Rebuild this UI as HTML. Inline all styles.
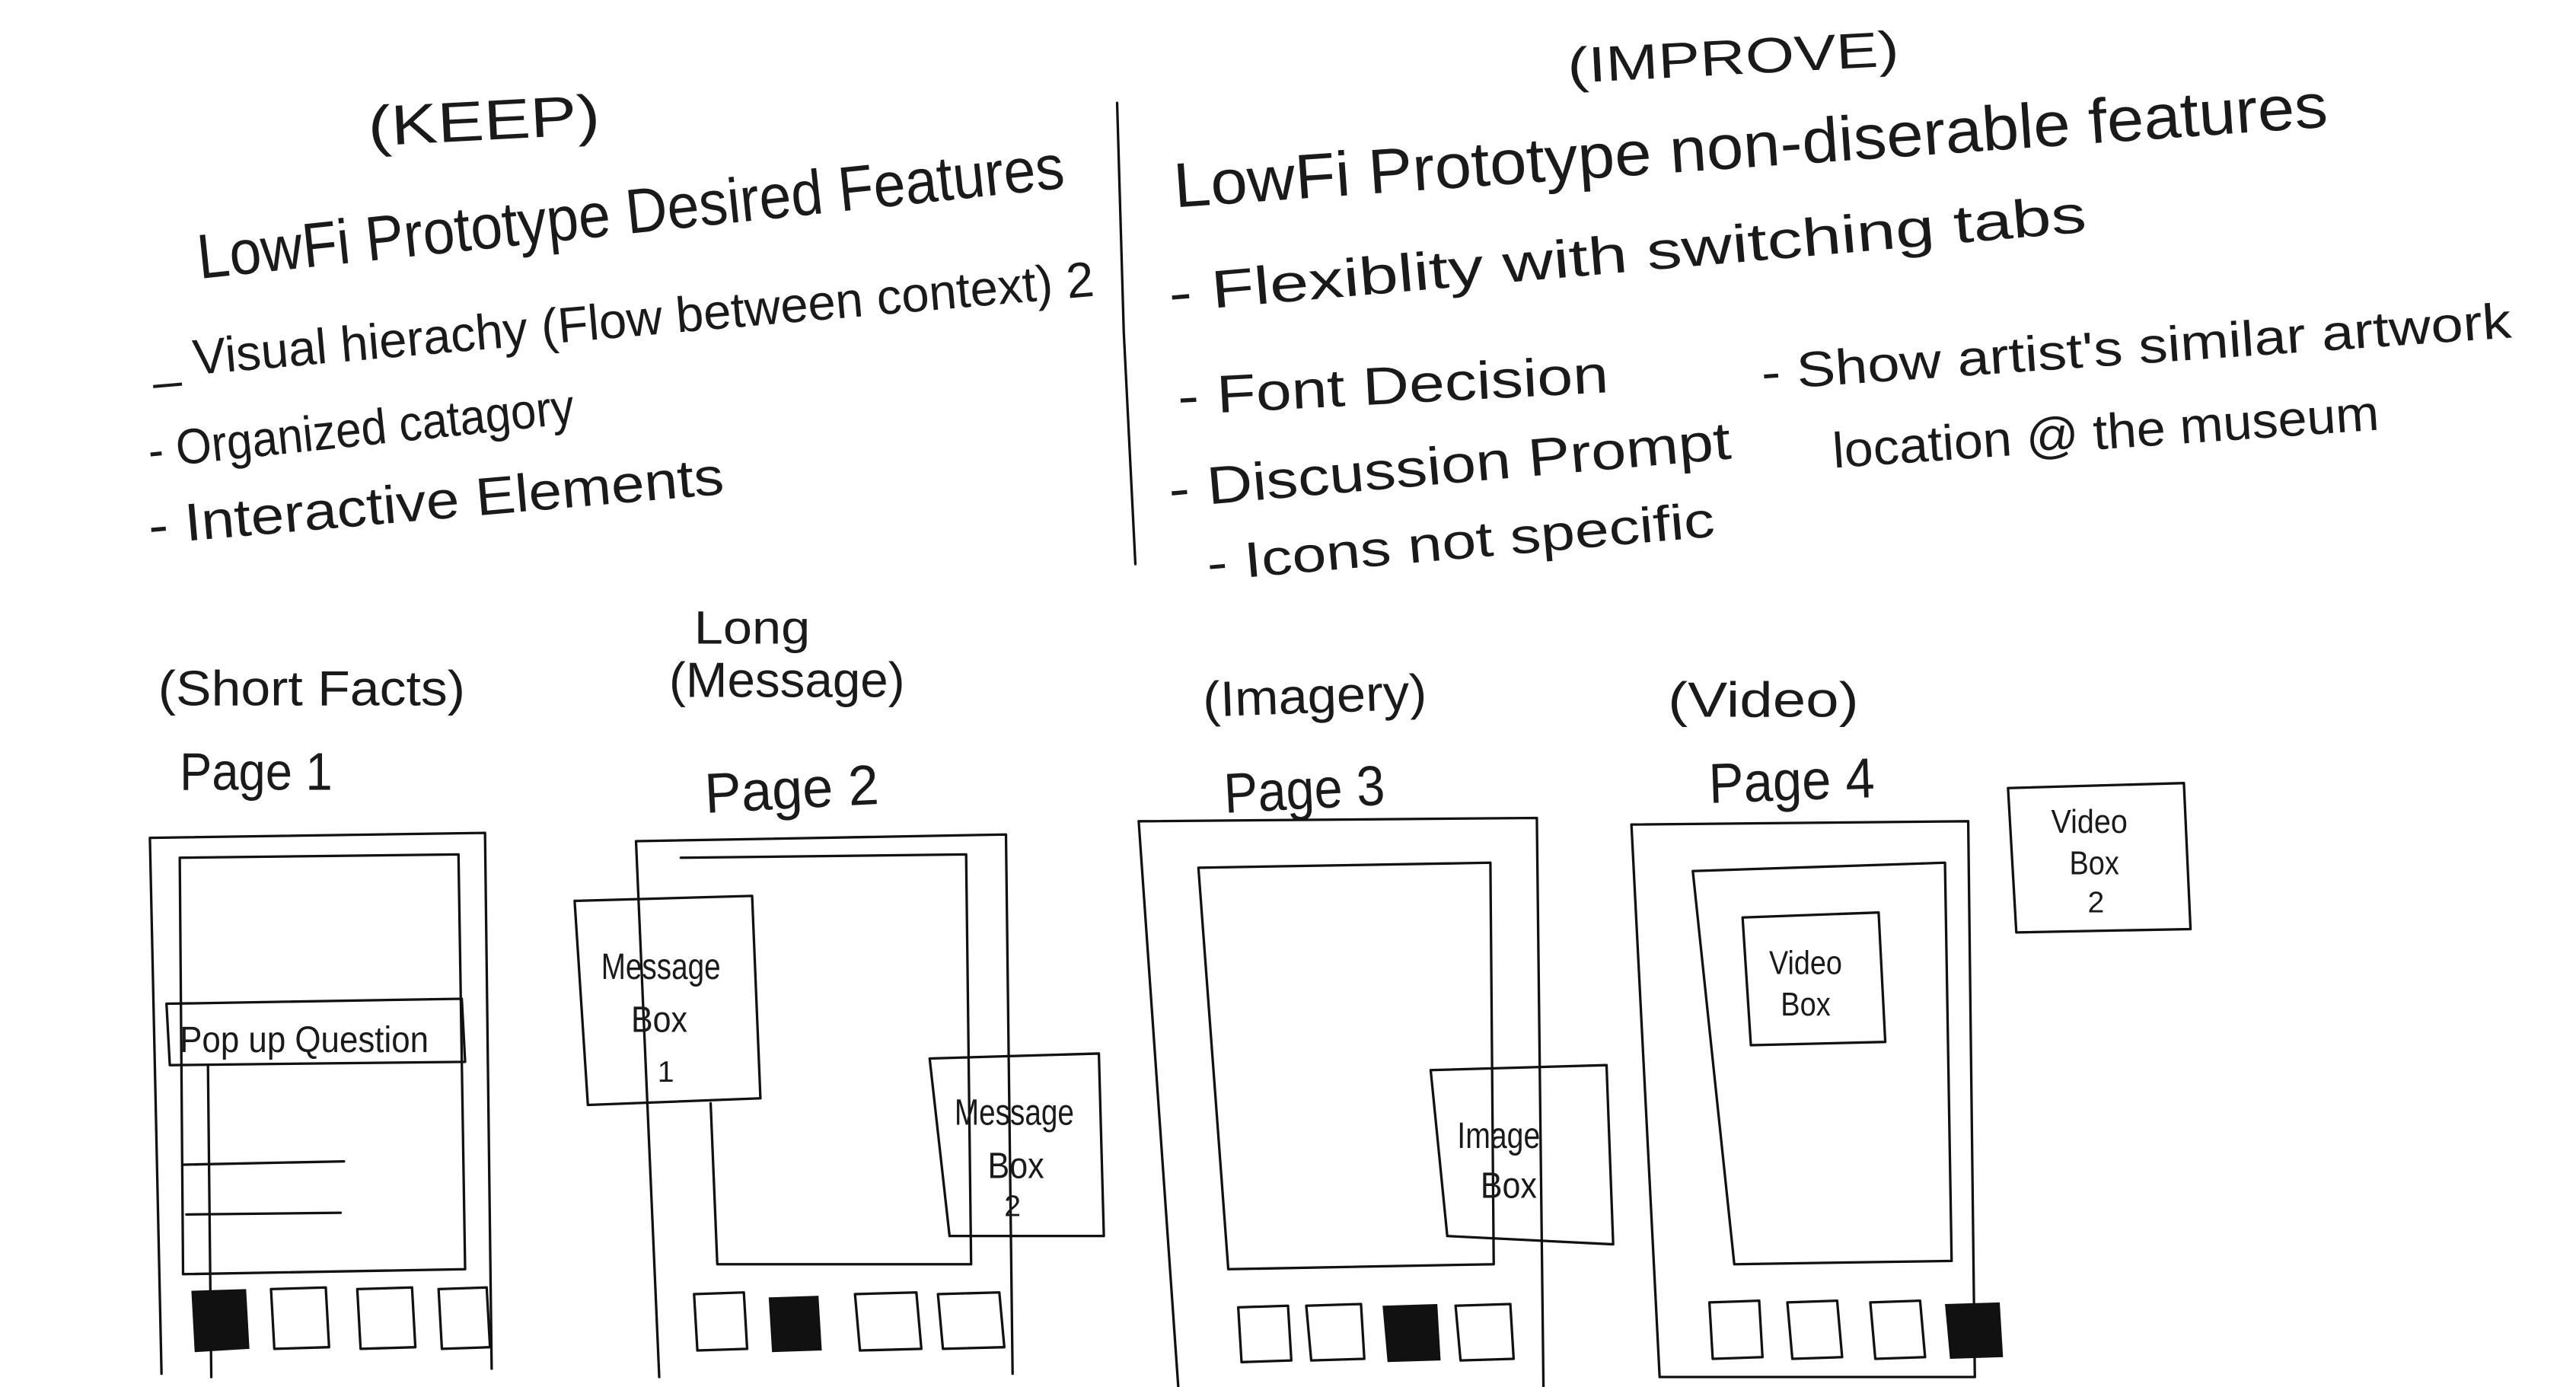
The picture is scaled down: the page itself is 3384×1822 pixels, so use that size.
<!DOCTYPE html>
<html>
<head>
<meta charset="utf-8">
<style>
html,body{margin:0;padding:0;background:#fff;}
svg{display:block;}
text{font-family:"Liberation Sans",sans-serif;fill:#1a1a1a;font-weight:normal;}
.s{fill:none;stroke:#111;stroke-width:1.5;stroke-linejoin:round;stroke-linecap:round;}
</style>
</head>
<body>
<svg width="3384" height="1822" viewBox="0 0 1552 836" xmlns="http://www.w3.org/2000/svg">
<rect width="1552" height="836" fill="#fff"/>

<text x="222" y="88" font-size="34" transform="rotate(-3 222 88)" textLength="140" lengthAdjust="spacingAndGlyphs">(KEEP)</text>
<text x="120" y="168" font-size="38" transform="rotate(-6 120 168)" textLength="525" lengthAdjust="spacingAndGlyphs">LowFi Prototype Desired Features</text>
<text x="92" y="228" font-size="30" transform="rotate(-5 92 228)" textLength="570" lengthAdjust="spacingAndGlyphs">_ Visual hierachy (Flow between context) 2</text>
<text x="90" y="282" font-size="30" transform="rotate(-6 90 282)" textLength="258" lengthAdjust="spacingAndGlyphs">- Organized catagory</text>
<text x="90" y="328" font-size="32" transform="rotate(-5 90 328)" textLength="348" lengthAdjust="spacingAndGlyphs">- Interactive Elements</text>

<path class="s" d="M673 62 L677 200 L684 340"/>

<text x="945" y="50" font-size="30" transform="rotate(-3 945 50)" textLength="200" lengthAdjust="spacingAndGlyphs">(IMPROVE)</text>
<text x="708" y="125" font-size="38" transform="rotate(-4 708 125)" textLength="697" lengthAdjust="spacingAndGlyphs">LowFi Prototype non-diserable features</text>
<text x="705" y="188" font-size="32" transform="rotate(-5 705 188)" textLength="555" lengthAdjust="spacingAndGlyphs">- Flexiblity with switching tabs</text>
<text x="710" y="250" font-size="32" transform="rotate(-3 710 250)" textLength="260" lengthAdjust="spacingAndGlyphs">- Font Decision</text>
<text x="1062" y="235" font-size="30" transform="rotate(-4 1062 235)" textLength="453" lengthAdjust="spacingAndGlyphs">- Show artist's similar artwork</text>
<text x="1105" y="282" font-size="30" transform="rotate(-4 1105 282)" textLength="330" lengthAdjust="spacingAndGlyphs">location @ the museum</text>
<text x="705" y="306" font-size="32" transform="rotate(-5 705 306)" textLength="340" lengthAdjust="spacingAndGlyphs">- Discussion Prompt</text>
<text x="728" y="350" font-size="30" transform="rotate(-5 728 350)" textLength="307" lengthAdjust="spacingAndGlyphs">- Icons not specific</text>

<text x="95" y="425" font-size="30" textLength="185" lengthAdjust="spacingAndGlyphs">(Short Facts)</text>
<text x="108" y="476" font-size="32" textLength="92" lengthAdjust="spacingAndGlyphs">Page 1</text>
<path class="s" d="M90 505 L292 502 L296 825 M90 505 L97 828"/>
<path class="s" d="M108 517 L276 515 L280 765 L110 768 Z"/>
<path class="s" d="M100 605 L278 602 L280 640 L102 642 Z"/>
<text x="108" y="634" font-size="22" textLength="150" lengthAdjust="spacingAndGlyphs">Pop up Question</text>
<path class="s" d="M125 642 L127 830"/>
<path class="s" d="M110 702 L207 700 M112 732 L205 731"/>
<path d="M115 778 L148 777 L150 813 L117 815 Z" fill="#111"/>
<path class="s" d="M163 777 L196 776 L198 812 L165 813 Z"/>
<path class="s" d="M215 777 L248 776 L250 812 L217 813 Z"/>
<path class="s" d="M264 777 L293 776 L295 812 L266 813 Z"/>

<text x="418" y="388" font-size="28" textLength="70" lengthAdjust="spacingAndGlyphs">Long</text>
<text x="403" y="420" font-size="30" textLength="142" lengthAdjust="spacingAndGlyphs">(Message)</text>
<text x="425" y="490" font-size="34" transform="rotate(-3 425 490)" textLength="105" lengthAdjust="spacingAndGlyphs">Page 2</text>
<path class="s" d="M383 507 L606 503 L610 828 M383 507 L397 830"/>
<path class="s" d="M410 517 L582 515 L585 762 L432 762 L428 665"/>
<path class="s" d="M346 543 L453 540 L458 662 L354 666 Z" fill="#fff"/>
<text x="362" y="590" font-size="22" textLength="72" lengthAdjust="spacingAndGlyphs">Message</text>
<text x="380" y="622" font-size="22" textLength="34" lengthAdjust="spacingAndGlyphs">Box</text>
<text x="396" y="652" font-size="18">1</text>
<path class="s" d="M560 638 L662 635 L665 745 L572 745 Z" fill="#fff"/>
<text x="575" y="678" font-size="22" textLength="72" lengthAdjust="spacingAndGlyphs">Message</text>
<text x="595" y="710" font-size="22" textLength="34" lengthAdjust="spacingAndGlyphs">Box</text>
<text x="605" y="733" font-size="18">2</text>
<path class="s" d="M418 780 L448 779 L450 813 L420 814 Z"/>
<path d="M463 782 L493 781 L495 814 L465 815 Z" fill="#111"/>
<path class="s" d="M515 780 L552 779 L555 813 L518 814 Z"/>
<path class="s" d="M565 780 L602 779 L605 812 L568 813 Z"/>

<text x="725" y="432" font-size="30" transform="rotate(-2 725 432)" textLength="135" lengthAdjust="spacingAndGlyphs">(Imagery)</text>
<text x="738" y="490" font-size="34" transform="rotate(-3 738 490)" textLength="97" lengthAdjust="spacingAndGlyphs">Page 3</text>
<path class="s" d="M686 495 L926 493 L930 838 L710 838 L686 495"/>
<path class="s" d="M722 523 L898 520 L900 762 L740 765 Z"/>
<path class="s" d="M862 645 L968 642 L972 750 L872 745 Z" fill="#fff"/>
<text x="878" y="692" font-size="22" textLength="50" lengthAdjust="spacingAndGlyphs">Image</text>
<text x="892" y="722" font-size="22" textLength="34" lengthAdjust="spacingAndGlyphs">Box</text>
<path class="s" d="M746 788 L776 787 L778 820 L748 821 Z"/>
<path class="s" d="M787 787 L820 786 L822 819 L790 820 Z"/>
<path d="M833 787 L866 786 L868 820 L836 821 Z" fill="#111"/>
<path class="s" d="M877 787 L910 786 L912 819 L880 820 Z"/>

<text x="1005" y="432" font-size="30" textLength="115" lengthAdjust="spacingAndGlyphs">(Video)</text>
<text x="1030" y="484" font-size="34" transform="rotate(-2 1030 484)" textLength="100" lengthAdjust="spacingAndGlyphs">Page 4</text>
<path class="s" d="M983 497 L1186 495 L1190 830 L1000 830 L983 497"/>
<path class="s" d="M1020 525 L1172 520 L1176 760 L1045 762 Z"/>
<path class="s" d="M1050 553 L1132 550 L1136 628 L1055 630 Z"/>
<text x="1066" y="587" font-size="20" textLength="44" lengthAdjust="spacingAndGlyphs">Video</text>
<text x="1073" y="612" font-size="20" textLength="30" lengthAdjust="spacingAndGlyphs">Box</text>
<path class="s" d="M1030 785 L1060 784 L1062 818 L1032 819 Z"/>
<path class="s" d="M1077 785 L1107 784 L1110 818 L1080 819 Z"/>
<path class="s" d="M1127 785 L1157 784 L1160 818 L1130 819 Z"/>
<path d="M1172 786 L1205 785 L1207 818 L1175 819 Z" fill="#111"/>

<path class="s" d="M1210 475 L1316 472 L1320 560 L1215 562 Z"/>
<text x="1236" y="502" font-size="20" textLength="46" lengthAdjust="spacingAndGlyphs">Video</text>
<text x="1247" y="527" font-size="20" textLength="30" lengthAdjust="spacingAndGlyphs">Box</text>
<text x="1258" y="550" font-size="18">2</text>
</svg>
</body>
</html>
